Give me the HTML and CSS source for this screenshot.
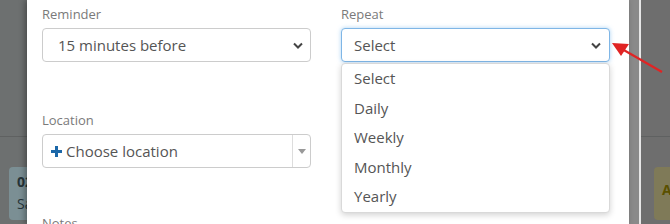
FILE: index.html
```html
<!DOCTYPE html>
<html>
<head>
<meta charset="utf-8">
<link rel="stylesheet" href="styles.css">
</head>
<body>
<div class="page">
  <div class="bg-left">
    <div class="bg-line"></div>
    <div class="card card-blue"><b>02</b><span>Sa</span></div>
  </div>
  <div class="modal">
    <div class="grid">
      <div class="field">
        <label class="lbl">Reminder</label>
        <div class="select">
          <span>15 minutes before</span>
          <svg class="chev" width="10" height="7" viewBox="0 0 10 7"><path d="M1 1.5 L5 5.5 L9 1.5" fill="none" stroke="#444" stroke-width="2"/></svg>
        </div>
      </div>
      <div class="field">
        <label class="lbl">Repeat</label>
        <div class="select focus">
          <span>Select</span>
          <svg class="chev" width="10" height="7" viewBox="0 0 10 7"><path d="M1 1.5 L5 5.5 L9 1.5" fill="none" stroke="#444" stroke-width="2"/></svg>
        </div>
        <ul class="menu">
          <li>Select</li>
          <li>Daily</li>
          <li>Weekly</li>
          <li>Monthly</li>
          <li>Yearly</li>
        </ul>
      </div>
      <div class="field loc">
        <label class="lbl">Location</label>
        <div class="select combo">
          <span class="choose"><svg class="plus" width="11" height="11" viewBox="0 0 11 11"><rect x="4" y="0" width="3" height="11" fill="#1b67a8"/><rect x="0" y="4" width="11" height="3" fill="#1b67a8"/></svg>Choose location</span>
          <span class="caret-box"><svg width="8" height="5" viewBox="0 0 8 5"><path d="M0 0 L8 0 L4 5 Z" fill="#999"/></svg></span>
        </div>
      </div>
      <div class="field notes">
        <label class="lbl">Notes</label>
      </div>
    </div>
  </div>
  <div class="scroll"></div>
  <div class="divider"></div>
  <div class="bg-right">
    <div class="bg-line"></div>
    <div class="card card-yellow"><b>A</b></div>
  </div>
  <svg class="arrow" width="60" height="50" viewBox="0 0 60 50">
    <line x1="52" y1="38" x2="12" y2="15" stroke="#e02424" stroke-width="2.2"/>
    <path d="M2 9 L19 10 L11 22 Z" fill="#e02424"/>
  </svg>
</div>
</body>
</html>
```

FILE: styles.css
```css
* { box-sizing: border-box; }
html, body { margin: 0; padding: 0; }
body {
  width: 670px;
  height: 224px;
  overflow: hidden;
  font-family: "Open Sans", "Liberation Sans", sans-serif;
  background: #6e6e6e;
}
.page {
  position: relative;
  display: flex;
  width: 670px;
  height: 224px;
  overflow: hidden;
}
.bg-left {
  width: 27px;
  flex: none;
  background: #6d7070;
  padding-top: 136px;
  position: relative;
  overflow: hidden;
}
.bg-right {
  flex: 1;
  background: #6e6e6e;
  padding-top: 136px;
  overflow: hidden;
}
.bg-line {
  height: 1px;
  background: #5f6161;
  margin-bottom: 30px;
}
.card {
  height: 53px;
  border-radius: 4px;
  padding: 6px 8px;
  display: flex;
  flex-direction: column;
  gap: 4px;
  font-size: 14px;
  line-height: 18px;
  white-space: nowrap;
}
.card-blue {
  margin-left: 9px;
  width: 60px;
  background: #7b8f94;
  color: #263438;
}
.card-yellow {
  margin-left: 13px;
  width: 60px;
  background: #7f7a58;
  color: #5a5000;
  padding-top: 14px;
}
.modal {
  width: 602px;
  flex: none;
  background: #fff;
  box-shadow: -2px 0 6px rgba(0,0,0,0.35);
  padding: 0 19px 0 15px;
  position: relative;
  z-index: 1;
}
.scroll {
  width: 10px;
  flex: none;
  background: #8a8a8a;
}
.divider {
  width: 2px;
  flex: none;
  background: #e6e6e6;
}
.grid {
  display: grid;
  grid-template-columns: 269px 269px;
  column-gap: 30px;
  grid-template-rows: 107px 100px 40px;
}
.field { position: relative; }
.lbl {
  display: block;
  font-size: 13px;
  line-height: 18px;
  color: #7a7a7a;
  margin-top: 5px;
  margin-bottom: 5px;
}
.loc { grid-column: 1; grid-row: 2; }
.loc .lbl { margin-top: 4px; }
.notes { grid-column: 1; grid-row: 3; }
.notes .lbl { margin-top: 7px; }
.select {
  height: 34px;
  border: 1px solid #cccccc;
  border-radius: 4px;
  display: flex;
  align-items: center;
  justify-content: space-between;
  padding: 0 7px 0 15px;
  font-size: 15px;
  color: #555;
  background: #fff;
}
.select.focus {
  border-color: #7fb6e6;
  box-shadow: 0 0 4px rgba(102,175,233,0.55);
  padding-left: 12px;
  padding-right: 8px;
}
.select.focus span { margin-top: -1px; }
.chev { display: block; }
.menu {
  list-style: none;
  margin: 0;
  padding: 0;
  position: absolute;
  left: 0;
  top: 63px;
  width: 269px;
  background: #fff;
  border: 1px solid #d9d9d9;
  border-radius: 4px;
  box-shadow: 0 2px 6px rgba(0,0,0,0.18);
  z-index: 2;
}
.menu li {
  height: 29.6px;
  line-height: 29px;
  padding-left: 12px;
  font-size: 15px;
  color: #555;
}
.combo {
  padding: 0;
  height: 34px;
}
.choose {
  display: flex;
  align-items: center;
  gap: 4px;
  padding-left: 8px;
  font-size: 15px;
  color: #555;
}
.plus { display: block; }
.caret-box {
  width: 18px;
  height: 100%;
  border-left: 1px solid #ddd;
  display: flex;
  align-items: center;
  justify-content: center;
}
.arrow {
  position: absolute;
  left: 610px;
  top: 34px;
  z-index: 3;
}
```
